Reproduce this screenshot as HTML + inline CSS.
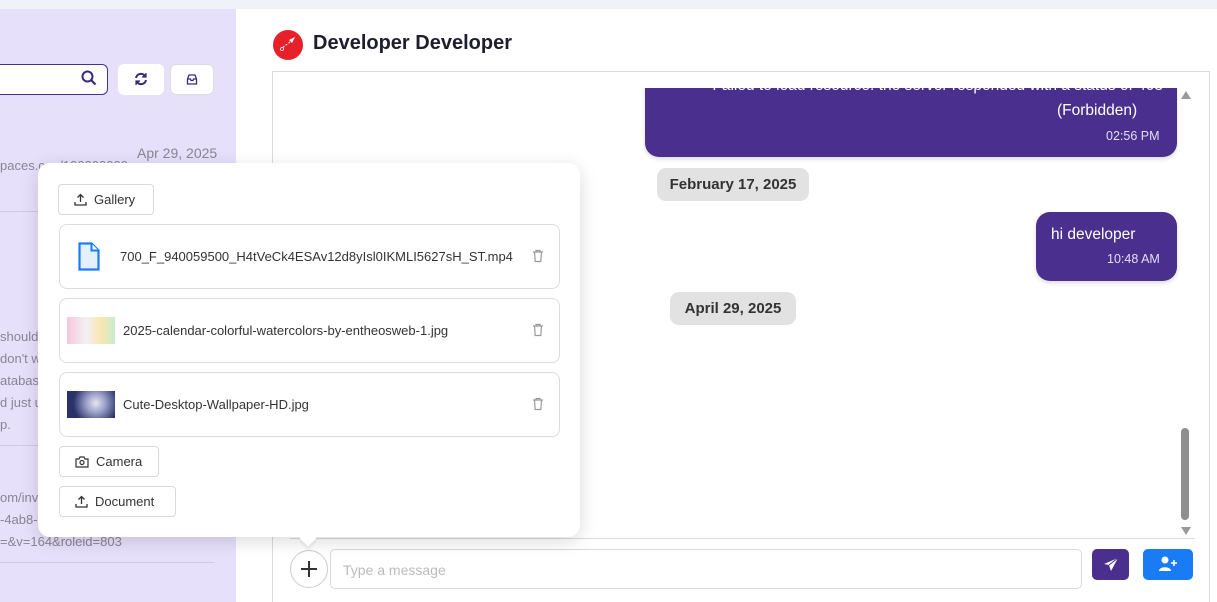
<!DOCTYPE html>
<html><head><meta charset="utf-8"><style>
*{box-sizing:border-box;margin:0;padding:0}
html,body{width:1217px;height:602px;overflow:hidden}
body{position:relative;background:#fff;font-family:"Liberation Sans",sans-serif;color:#222}
.a{position:absolute}
.side{left:0;top:9px;width:236px;height:593px;background:#e6e0fb}
.st{color:#8a8494;font-size:13px;white-space:nowrap}
.hr{height:1px;background:#d0cbe0}
.btn{background:#fff;border:1px solid #d9d9d9;border-radius:4px;font-size:13px;color:#333;display:flex;align-items:center;gap:7px;padding-left:15px}
.card{left:59px;width:501px;height:65px;border:1px solid #dcdcdc;border-radius:8px;display:flex;align-items:center;font-size:13px;color:#333}
.bub{background:#4a2f8f;color:#fff;border-radius:14px;box-shadow:0 2px 5px rgba(0,0,0,.15)}
.chip{background:#e2e2e2;border-radius:9px;font-weight:bold;font-size:15px;color:#333;display:flex;align-items:center;justify-content:center}
</style></head><body>
<div class="a" style="left:0;top:0;width:1217px;height:9px;background:#eff2f8"></div>
<div class="a side"></div>
<div class="a" style="left:-10px;top:64px;width:118px;height:31px;border:1px solid #4a2f8f;border-radius:6px;background:#fff"></div>
<svg class="a" style="left:81px;top:70px" width="16" height="16" viewBox="0 0 16 16"><circle cx="6.5" cy="6.5" r="5" fill="none" stroke="#3b2a7a" stroke-width="2"/><path d="M10 10l4.5 4.5" stroke="#3b2a7a" stroke-width="2.2"/></svg>
<div class="a" style="left:118px;top:64px;width:46px;height:31px;background:#fff;border-radius:6px"></div>
<svg class="a" style="left:134px;top:72px" width="14" height="14" viewBox="0 0 14 14"><path d="M2 6a5 5 0 0 1 9-2M12 8a5 5 0 0 1-9 2" fill="none" stroke="#3b2a7a" stroke-width="2"/><path d="M12 1v4H8M2 13V9h4" fill="#3b2a7a" stroke="#3b2a7a" stroke-width="1.2"/></svg>
<div class="a" style="left:170px;top:64px;width:44px;height:31px;background:#fff;border-radius:6px;border:1px solid #ddd"></div>
<svg class="a" style="left:186px;top:74px" width="12" height="11" viewBox="0 0 12 11"><path d="M1.5 5L3 1h6l1.5 4v5h-9zM1.5 5h3l.5 1.5h2L7.5 5h3" fill="none" stroke="#3b2a7a" stroke-width="1.3"/></svg>
<div class="a st" style="left:137px;top:145px;font-size:14px">Apr 29, 2025</div>
<div class="a st" style="left:0;top:158px">paces.c... /100000000</div>
<div class="a hr" style="left:0;top:211px;width:215px"></div>
<div class="a st" style="left:0;top:326px;line-height:22px">should<br>don't w<br>atabas<br>d just u<br>p.</div>
<div class="a hr" style="left:0;top:445px;width:215px"></div>
<div class="a st" style="left:0;top:487px;line-height:22px">om/inv<br>-4ab8-<br>=&amp;v=164&amp;roleid=803</div>
<div class="a hr" style="left:0;top:562px;width:215px"></div>

<div class="a" style="left:273px;top:30px;width:30px;height:30px;border-radius:50%;background:#e8202a"></div>
<svg class="a" style="left:278px;top:35px" width="20" height="20" viewBox="0 0 20 20"><path d="M17 2l-6 3 3 3z" fill="#fff"/><path d="M12 7L4 13" stroke="#fff" stroke-width="1" stroke-dasharray="2 1.5"/><circle cx="4" cy="14" r="1.5" fill="none" stroke="#fff" stroke-width=".8"/></svg>
<div class="a" style="left:313px;top:32px;font-size:20px;font-weight:bold;color:#1e1e2e">Developer Developer</div>

<div class="a" style="left:272px;top:71px;width:938px;height:531px;border:1px solid #dcdcdc;border-bottom:none;background:#fff"></div>
<div class="a" style="left:1181px;top:91px;width:0;height:0;border-left:5px solid transparent;border-right:5px solid transparent;border-bottom:8px solid #999"></div>
<div class="a" style="left:1181px;top:428px;width:8px;height:92px;border-radius:4px;background:#8f8f8f"></div>
<div class="a" style="left:1181px;top:527px;width:0;height:0;border-left:5px solid transparent;border-right:5px solid transparent;border-top:8px solid #999"></div>

<div class="a" style="left:273px;top:88px;width:905px;height:450px;overflow:hidden">
 <div class="a bub" style="left:372px;top:-30px;width:532px;height:99px"></div>
 <div class="a" style="left:387px;top:-11px;width:503px;text-align:right;color:#fff;font-size:15.5px">Failed to load resource: the server responded with a status of 403</div>
 <div class="a" style="left:784px;top:14px;color:#fff;font-size:15.5px">(Forbidden)</div>
 <div class="a" style="left:833px;top:41px;color:#e4defa;font-size:12.5px">02:56 PM</div>
</div>
<div class="a chip" style="left:657px;top:168px;width:152px;height:33px">February 17, 2025</div>
<div class="a bub" style="left:1036px;top:212px;width:141px;height:69px"></div>
<div class="a" style="left:1051px;top:226px;color:#fff;font-size:15.5px">hi developer</div>
<div class="a" style="left:1107px;top:252px;color:#e4defa;font-size:12.5px">10:48 AM</div>
<div class="a chip" style="left:670px;top:292px;width:126px;height:33px">April 29, 2025</div>
<div class="a" style="left:290px;top:538px;width:905px;height:1px;background:#dcdcdc"></div>

<div class="a" style="left:290px;top:550px;width:38px;height:38px;border-radius:50%;border:1px solid #ccc;background:#fff"></div>
<div class="a" style="left:301px;top:568px;width:16px;height:2px;background:#333"></div>
<div class="a" style="left:308px;top:561px;width:2px;height:16px;background:#333"></div>
<div class="a" style="left:330px;top:549px;width:752px;height:40px;border:1px solid #d9d9d9;border-radius:5px;padding:12px;font-size:14px;color:#bbb">Type a message</div>
<div class="a" style="left:1092px;top:549px;width:37px;height:31px;border-radius:5px;background:#4a2f8f"></div>
<svg class="a" style="left:1103px;top:557px" width="16" height="15" viewBox="0 0 16 15"><path d="M15 1L1 7l5 1 2 6z" fill="#fff"/><path d="M15 1L6 8" stroke="#4a2f8f" stroke-width="1"/></svg>
<div class="a" style="left:1143px;top:549px;width:50px;height:31px;border-radius:5px;background:#1a7cf5"></div>
<svg class="a" style="left:1158px;top:556px" width="20" height="16" viewBox="0 0 20 16"><circle cx="7" cy="4" r="3.5" fill="#fff"/><path d="M1 15c0-5 12-5 12 0z" fill="#fff"/><path d="M16 4v6M13 7h6" stroke="#fff" stroke-width="1.6"/></svg>

<div class="a" style="left:38px;top:163px;width:542px;height:374px;background:#fff;border-radius:12px;box-shadow:0 4px 18px rgba(0,0,0,.15)"></div>
<div class="a" style="left:302px;top:532px;width:12px;height:12px;background:#fff;transform:rotate(45deg);box-shadow:2px 2px 3px rgba(0,0,0,.08)"></div>
<div class="a btn" style="left:58px;top:184px;width:96px;height:31px"><svg width="13" height="13" viewBox="0 0 13 13"><path d="M6.5 9V1.5M3.5 4.5l3-3 3 3M1 9v3h11V9" fill="none" stroke="#333" stroke-width="1.3"/></svg>Gallery</div>
<div class="a card" style="top:224px"><svg style="margin:0 20px 0 18px" width="22" height="29" viewBox="0 0 22 29"><path d="M1.5 1.5h12l7 7v19h-19z" fill="#e4f0ff" stroke="#1a7cf5" stroke-width="2.2"/><path d="M13.5 1.5v7h7" fill="#fff" stroke="#1a7cf5" stroke-width="2"/></svg>700_F_940059500_H4tVeCk4ESAv12d8yIsl0IKMLI5627sH_ST.mp4</div>
<div class="a card" style="top:298px"><div style="width:48px;height:27px;margin:0 8px 0 7px;background:linear-gradient(90deg,#f6c6dc,#f4f0f4 40%,#f9e6b0 70%,#c8eccf)"></div>2025-calendar-colorful-watercolors-by-entheosweb-1.jpg</div>
<div class="a card" style="top:372px"><div style="width:48px;height:27px;margin:0 8px 0 7px;background:radial-gradient(circle at 60% 45%,#e6e6f0 0,#9aa0c8 30%,#2a3268 70%)"></div>Cute-Desktop-Wallpaper-HD.jpg</div>
<svg class="a" style="left:532px;top:249px" width="12" height="14" viewBox="0 0 12 14"><path d="M1 3h10M4 3V1.5h4V3M2.5 3l.7 9.5h5.6L9.5 3" fill="none" stroke="#999" stroke-width="1.2"/></svg>
<svg class="a" style="left:532px;top:323px" width="12" height="14" viewBox="0 0 12 14"><path d="M1 3h10M4 3V1.5h4V3M2.5 3l.7 9.5h5.6L9.5 3" fill="none" stroke="#999" stroke-width="1.2"/></svg>
<svg class="a" style="left:532px;top:397px" width="12" height="14" viewBox="0 0 12 14"><path d="M1 3h10M4 3V1.5h4V3M2.5 3l.7 9.5h5.6L9.5 3" fill="none" stroke="#999" stroke-width="1.2"/></svg>
<div class="a btn" style="left:59px;top:446px;width:100px;height:31px"><svg width="14" height="12" viewBox="0 0 14 12"><path d="M1 3h3l1-2h4l1 2h3v8H1z" fill="none" stroke="#333" stroke-width="1.2"/><circle cx="7" cy="6.5" r="2" fill="none" stroke="#333" stroke-width="1.2"/></svg>Camera</div>
<div class="a btn" style="left:59px;top:486px;width:117px;height:31px"><svg width="13" height="13" viewBox="0 0 13 13"><path d="M6.5 9V1.5M3.5 4.5l3-3 3 3M1 9v3h11V9" fill="none" stroke="#333" stroke-width="1.3"/></svg>Document</div>
</body></html>
